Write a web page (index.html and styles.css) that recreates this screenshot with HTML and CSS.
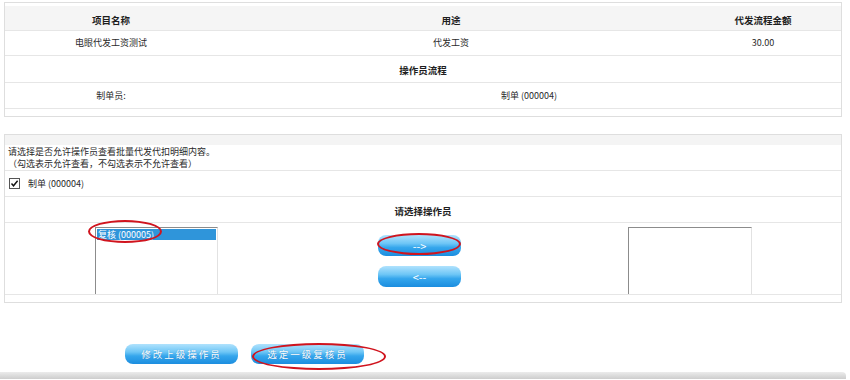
FILE: index.html
```html
<!DOCTYPE html>
<html lang="zh-CN">
<head>
  <meta charset="UTF-8">
  <title>选择复核员</title>
  <link rel="stylesheet" href="styles.css">
</head>
<body>
  <div class="panel">
    <table class="grid">
      <tr class="head">
        <th class="c1">项目名称</th>
        <th class="c2">用途</th>
        <th class="c3">代发流程金额</th>
      </tr>
      <tr class="r2">
        <td>电眼代发工资测试</td>
        <td>代发工资</td>
        <td>30.00</td>
      </tr>
      <tr class="r3">
        <th colspan="3">操作员流程</th>
      </tr>
      <tr class="r4">
        <td>制单员:</td>
        <td colspan="2">制单 (000004)</td>
      </tr>
      <tr class="end">
        <td colspan="3"></td>
      </tr>
    </table>
  </div>

  <div class="panel panel-ops">
    <div class="band"></div>
    <table class="grid">
      <tr class="note">
        <td>请选择是否允许操作员查看批量代发代扣明细内容。<br>（勾选表示允许查看，不勾选表示不允许查看）</td>
      </tr>
      <tr class="row">
        <td>
          <label class="check-item">
            <span class="check">
              <svg width="9" height="9" viewBox="0 0 9 9"><path d="M1.5 4.5 L3.5 6.8 L7.6 1.8" fill="none" stroke="#111" stroke-width="1.4"/></svg>
            </span>
            制单 (000004)
          </label>
        </td>
      </tr>
      <tr class="row">
        <th>请选择操作员</th>
      </tr>
      <tr class="lists">
        <td>
          <div class="chooser">
            <div class="listbox left-list">
              <div class="option selected">复核 (000005)</div>
            </div>
            <div class="movers">
              <button class="pill" type="button">--&gt;</button>
              <button class="pill" type="button">&lt;--</button>
            </div>
            <div class="listbox right-list"></div>
          </div>
        </td>
      </tr>
      <tr class="end">
        <td></td>
      </tr>
    </table>
  </div>

  <div class="actions">
    <button class="pill wide" type="button">修改上级操作员</button>
    <button class="pill wide" type="button">选定一级复核员</button>
  </div>

  <div class="footer-bar"></div>

  <!-- red annotation marks from the original screenshot -->
  <span class="mark mark-option"></span>
  <span class="mark mark-arrow"></span>
  <span class="mark mark-submit"></span>
</body>
</html>
```

FILE: styles.css
```css
body {
  margin: 0;
  font-family: "Noto Sans CJK SC", sans-serif;
  font-size: 9px;
  color: #2a2a2a;
  background-color: #fff;
}
.panel {
  width: 838px;
  margin: 2px 0 0 4px;
  padding-top: 3px;
  border: 1px solid #dedede;
  box-sizing: border-box;
}
.panel-ops {
  margin-top: 17px;
  padding-top: 0;
}
.band {
  height: 10px;
  background-color: #f4f4f4;
}
.grid {
  width: 100%;
  border-collapse: collapse;
  table-layout: fixed;
}
.grid th,
.grid td {
  padding: 0;
  text-align: center;
  border-bottom: 1px solid #e6e6e6;
  line-height: 12px;
}
.grid th {
  font-weight: bold;
  font-size: 9.5px;
  color: #1e1e1e;
  padding-top: 2px;
}
.grid .end td {
  height: 7px;
  border-bottom: none;
}
.c1 { width: 212px; }
.c2 { width: 468px; }
.head th {
  height: 21px;
  padding-top: 3px;
  background-color: #f5f5f5;
}
.r2 td { height: 24px; }
.r3 th { height: 24px; }
.r4 td { height: 25px; }
.note td {
  height: 25px;
  text-align: left;
  padding-left: 3px;
  line-height: 12px;
}
.row td,
.row th {
  height: 25px;
}
.row th {
  height: 23px;
}
.row td {
  text-align: left;
  padding-left: 4px;
}
.check-item {
  display: flex;
  align-items: center;
  gap: 8px;
}
.check {
  display: flex;
  align-items: center;
  justify-content: center;
  width: 9px;
  height: 9px;
  border: 1px solid #555;
  background-color: #fff;
}
.lists td {
  height: 71px;
  vertical-align: top;
}
.chooser {
  display: flex;
  align-items: flex-start;
  padding-top: 4px;
}
.listbox {
  height: 67px;
  padding: 1px;
  box-sizing: border-box;
  border-top: 1px solid #8c8c8c;
  border-left: 1px solid #8c8c8c;
  border-right: 1px solid #e2e2e2;
  background-color: #fff;
}
.left-list {
  width: 123px;
  margin-left: 90px;
}
.right-list {
  width: 124px;
  margin-left: 167px;
}
.option {
  height: 11px;
  line-height: 11px;
  padding-left: 1px;
  font-size: 9px;
  text-align: left;
  white-space: nowrap;
}
.option.selected {
  background-color: #2f95da;
  color: #fff;
}
.movers {
  display: flex;
  flex-direction: column;
  gap: 10px;
  width: 83px;
  margin-left: 160px;
  padding-top: 8px;
}
.pill {
  height: 21px;
  padding: 0;
  border: none;
  border-radius: 8px;
  background: linear-gradient(to bottom, #b0e2fd 0%, #6ec6f6 40%, #35a6ec 60%, #1b8ddf 100%);
  color: #fff;
  font-family: "Noto Sans CJK SC", sans-serif;
  font-size: 11px;
  cursor: pointer;
}
.actions {
  display: flex;
  gap: 13px;
  margin-top: 41px;
  padding-left: 125px;
}
.pill.wide {
  width: 113px;
  height: 20px;
  font-size: 9.5px;
  letter-spacing: 2px;
  text-shadow: 0 0 1px rgba(0, 60, 120, 0.4);
}
.footer-bar {
  height: 7px;
  margin: 8px 4px 0 0;
  border-radius: 0 4px 0 0;
  background: linear-gradient(to bottom, #ececec, #cdcdcd);
}
.mark {
  position: absolute;
  border: 2px solid #d0141e;
  border-radius: 50%;
  box-sizing: border-box;
}
.mark-option {
  left: 88px;
  top: 220px;
  width: 74px;
  height: 23px;
}
.mark-arrow {
  left: 377px;
  top: 233px;
  width: 84px;
  height: 22px;
}
.mark-submit {
  left: 252px;
  top: 343px;
  width: 134px;
  height: 27px;
}
```
